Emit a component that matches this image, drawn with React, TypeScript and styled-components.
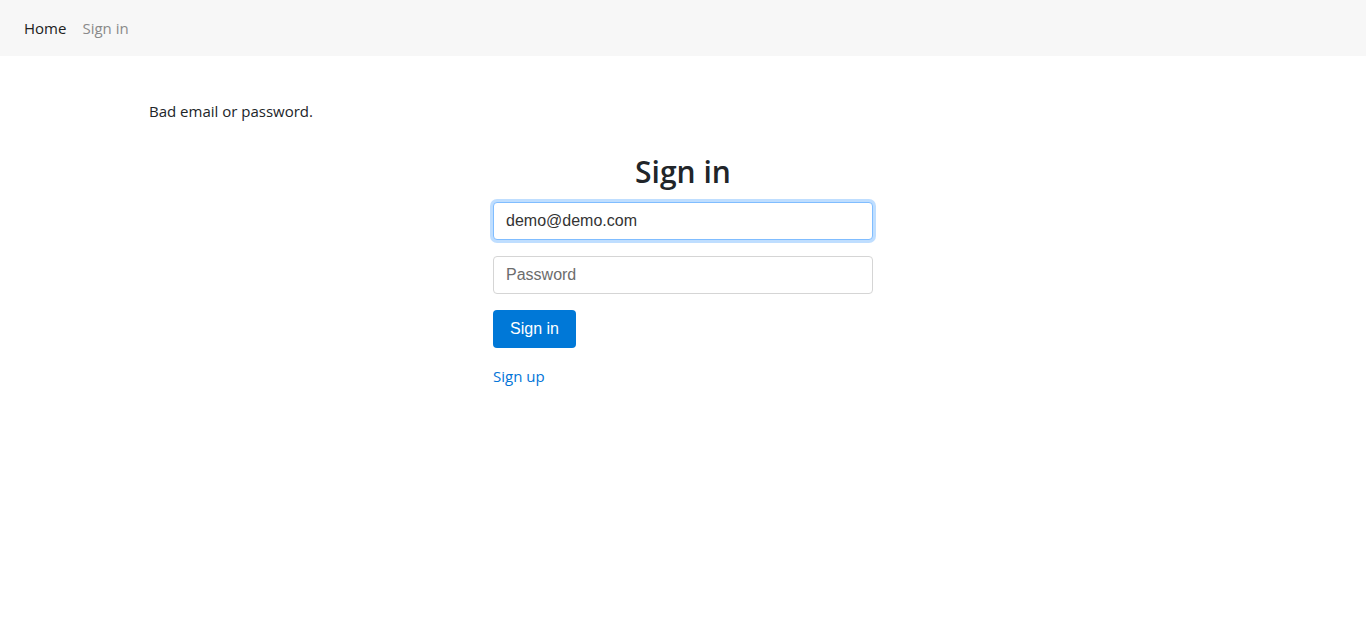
import React from "react"
import styled, { createGlobalStyle } from "styled-components"

const GlobalStyle = createGlobalStyle`
  html, body {
    margin: 0;
    padding: 0;
    background: #fff;
    color: #212529;
    font-family: "Open Sans", "Noto Sans", sans-serif;
  }
`

const App: React.FC = () => {
  return (
    <>
      <GlobalStyle />
      <S.Navbar>
        <S.NavLink $active>Home</S.NavLink>
        <S.NavLink>Sign in</S.NavLink>
      </S.Navbar>
      <S.Main>
        <S.Alert>Bad email or password.</S.Alert>
        <S.Form onSubmit={(e) => e.preventDefault()}>
          <S.Title>Sign in</S.Title>
          <S.Input type="email" defaultValue="demo@demo.com" $focused />
          <S.Input type="password" placeholder="Password" />
          <S.Row>
            <S.Button type="submit">Sign in</S.Button>
          </S.Row>
          <S.Link href="#">Sign up</S.Link>
        </S.Form>
      </S.Main>
    </>
  )
}

const S = {
  Navbar: styled.nav`
    display: flex;
    align-items: center;
    gap: 16px;
    height: 56px;
    padding: 0 24px;
    background-color: #f7f7f7;
    box-sizing: border-box;
  `,
  NavLink: styled.a<{ $active?: boolean }>`
    font-size: 15px;
    color: ${(p) => (p.$active ? "#212121" : "#8a8a8a")};
    text-decoration: none;
    cursor: pointer;
  `,
  Main: styled.main`
    padding: 43px 149px 0;
  `,
  Alert: styled.div`
    font-size: 15px;
    line-height: 24px;
    color: #212529;
  `,
  Form: styled.form`
    width: 380px;
    margin: 30px auto 0;
    display: flex;
    flex-direction: column;
  `,
  Title: styled.h2`
    margin: 0 0 11px;
    text-align: center;
    font-size: 30px;
    font-weight: 600;
    line-height: 38px;
    color: #212529;
  `,
  Input: styled.input<{ $focused?: boolean }>`
    box-sizing: border-box;
    height: 38px;
    width: 100%;
    margin-bottom: 16px;
    padding: 6px 12px;
    font-family: "Liberation Sans", Arial, sans-serif;
    font-size: 16px;
    color: #333;
    background: #fff;
    border: 1px solid ${(p) => (p.$focused ? "#80bdff" : "#d5d5d5")};
    border-radius: 4px;
    outline: none;
    box-shadow: ${(p) => (p.$focused ? "0 0 0 3px rgba(0, 123, 255, 0.25)" : "none")};
    &::placeholder {
      color: #6c6c6c;
    }
  `,
  Row: styled.div`
    display: flex;
    margin-bottom: 18px;
  `,
  Button: styled.button`
    height: 38px;
    padding: 0 17px;
    font-family: "Liberation Sans", Arial, sans-serif;
    font-size: 16px;
    color: #fff;
    background-color: #0078d7;
    border: none;
    border-radius: 4px;
    cursor: pointer;
  `,
  Link: styled.a`
    align-self: flex-start;
    font-size: 15px;
    color: #0275d8;
    text-decoration: none;
  `,
}

export default App
